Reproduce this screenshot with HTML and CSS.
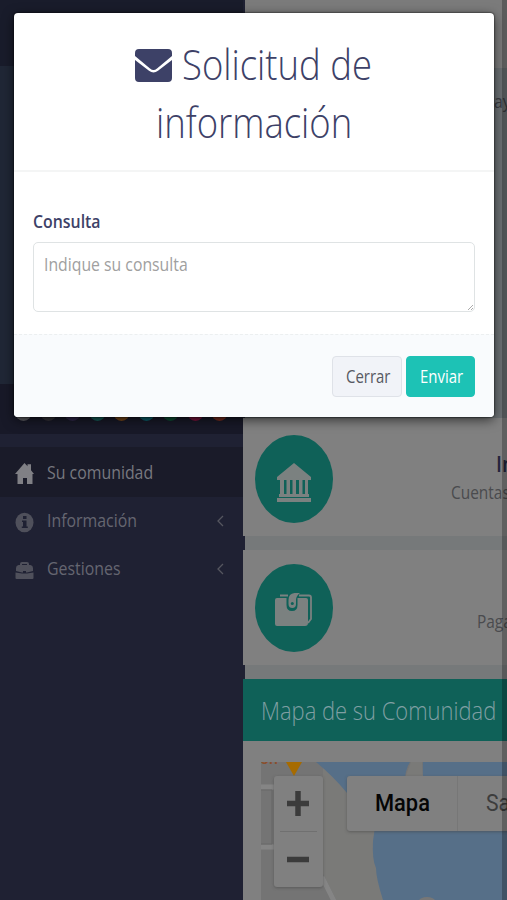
FILE: index.html
```html
<!DOCTYPE html>
<html lang="es">
<head>
<meta charset="utf-8">
<title>Solicitud de información</title>
<link rel="stylesheet" href="styles.css">
</head>
<body>
<div class="page">
  <aside class="sidebar">
    <div class="brand"></div>
    <div class="profile"></div>
    <div class="themes"><i class="c1"></i><i class="c2"></i><i class="c3"></i><i class="c4"></i><i class="c5"></i><i class="c6"></i><i class="c7"></i><i class="c8"></i><i class="c9"></i></div>
    <nav class="menu">
      <a class="item active">
        <svg width="20" height="22" viewBox="0 0 20 22"><path fill="#808085" d="M9.500 0 12.500 3.200V1.200h3.500v6L19 11h-1.500v10H12v-6H8v6H2.500V11H0z"/></svg>
        <span class="t">Su comunidad</span>
      </a>
      <a class="item">
        <svg width="20" height="22" viewBox="0 0 20 22"><ellipse cx="9.500" cy="11.500" rx="9" ry="9.800" fill="#4f505b"/><path fill="#1f2133" d="M8 5h3.500v3H8zM7 9.500h4.500v6h1.300V17H6.800v-1.500H8V11H7z"/></svg>
        <span class="t">Información</span>
        <svg class="chev" width="7" height="12" viewBox="0 0 7 12"><path d="M6 1 1 6l5 5" fill="none" stroke="#55565f" stroke-width="1.300"/></svg>
      </a>
      <a class="item">
        <svg width="20" height="22" viewBox="0 0 20 22"><path fill="#4f505b" d="M5 6V5q0-2 2-2h5q2 0 2 2v1h1.500q2.500.500 2.500 3v3l-6 1.500h-5L1 12V9q0-2.500 2.500-3zm2 0h5V5H7zM.500 13.500 7 14.500h5l6.500-1V19q0 1-1 1h-16q-1 0-1-1z"/><path fill="#1f2133" d="M8 12h3v2H8z"/></svg>
        <span class="t">Gestiones</span>
        <svg class="chev" width="7" height="12" viewBox="0 0 7 12"><path d="M6 1 1 6l5 5" fill="none" stroke="#55565f" stroke-width="1.300"/></svg>
      </a>
    </nav>
  </aside>
  <main class="main">
    <div class="topbar"></div>
    <div class="crumb"><span class="t">ay</span></div>
    <section class="card first">
      <div class="disc"><svg width="36" height="40" viewBox="0 0 36 40"><path fill="#7b8180" d="M18 0 35 14v3H1v-3zM4 17h4v14H4zm6.500 0H14v14h-3.500zm6 0H20v14h-3.500zm6.500 0h3.500v14H23zm6 0h3v14h-3zM3 31h30v3H3zM1 35h34v4H1z"/></svg></div>
      <div class="info"><b class="t">Información</b><span class="t">Cuentas, documentos</span></div>
    </section>
    <section class="card second">
      <div class="disc"><svg width="38" height="34" viewBox="0 0 38 34"><path fill="#7b8180" d="M2 5h9.500v7q0 6 5.500 6t5.500-6V5H31q2 0 2 2v23q0 3-3 3H2q-2 0-2-2V7q0-2 2-2z"/><path fill="none" stroke="#7b8180" stroke-width="1.800" d="M5 2.500h8M24 2.500h10q2 0 2 2V26l-3 4"/><path fill="#7b8180" d="M13.500 7q0-6.500 6-7H25q-4 3-4 7v4q0 4-3.700 4t-3.800-4z"/><circle cx="17.300" cy="10.500" r="1.500" fill="#0f6158"/></svg></div>
      <div class="info pay"><span class="t">Pagar recibos</span></div>
    </section>
    <section class="map-card">
      <h2><span class="t">Mapa de su Comunidad</span></h2>
      <div class="map">
        <svg class="tiles" width="246" height="138" viewBox="0 0 246 138"><path fill="#747474" d="M0 0h246v138H0z"/><path fill="#7a7a78" d="M16 0h110v138H75L62 112V0z"/><path fill="#566f88" d="M55 0h94q-5 7-6 25h18L162 0h84v138H122q-7-22-7-32-4-8-3-27l2-14V45L86 31Q72 14 55 0z"/><path fill="#7a7a78" d="M150 0h11l2 30h-22q2-12 4-17z"/><path d="M0 25h15M0 85h15M61 115l12 24" fill="none" stroke="#858585" stroke-width="5"/><path d="M0 28h11v54H0" fill="none" stroke="#686868"/><path fill="#a66b00" d="M25 0h16l-8 14z"/><ellipse cx="166" cy="139" rx="8" ry="4" fill="#777"/></svg>
        <span class="place">ón</span>
        <div class="zoom"><svg width="49" height="111" viewBox="0 0 49 111"><path d="M13 27.500h22M24 15v25M13 83.500h22" stroke="#3b3b3b" stroke-width="5.500"/><path d="M6 55.500h37" stroke="#707070"/></svg></div>
        <div class="types"><b><span class="t">Mapa</span></b><span class="sat"><span class="t">Satélite</span></span></div>
      </div>
    </section>
  </main>
  <div class="edge"></div>
  <div class="modal">
    <header>
      <h1><svg width="37" height="33" viewBox="0 0 37 33"><path fill="#3d4167" d="M4 0h29q4 0 4 4v3L22 19.500q-3.500 3-7 0L0 7V4q0-4 4-4z"/><path fill="#3d4167" d="M0 11 14 21.800q4.500 3.500 9 0L37 11v18q0 4-4 4H4q-4 0-4-4z"/></svg><span class="t">Solicitud de</span><span class="t line2">información</span></h1>
    </header>
    <div class="body">
      <label class="t">Consulta</label>
      <div class="field"><span class="t">Indique su consulta</span><svg width="5" height="5" viewBox="0 0 5 5"><path d="M0 5 5 0M3 5l2-2" stroke="#aaa"/></svg></div>
    </div>
    <footer>
      <button class="close"><span class="t">Cerrar</span></button>
      <button class="send"><span class="t">Enviar</span></button>
    </footer>
  </div>
</div>
</body>
</html>
```
FILE: styles.css
```css
* { box-sizing: border-box; }
body { margin: 0; font-family: "Open Sans", "Noto Sans", sans-serif; font-size: 18px; }
svg { display: block; flex: none; }
.t { display: inline-block; white-space: nowrap; transform: scaleX(.882); transform-origin: 0 50%; }
.page { position: relative; display: flex; width: 507px; height: 900px; overflow: hidden; background: #1f2133; }

.sidebar { width: 243px; flex: none; }
.brand { height: 66px; background: #191c2b; }
.profile { height: 318px; background: #202736; }
.themes { height: 50px; background: #181928; padding: 19px 0 0 15px; display: flex; gap: 7.500px; }
.themes i { width: 17px; height: 18px; border-radius: 50%; flex: none; }
.c1 { background: #5c5c61; } .c2 { background: #343238; } .c3 { background: #30284a; }
.c4 { background: #165c57; } .c5 { background: #76471a; } .c6 { background: #0b5f6a; }
.c7 { background: #0d4d33; } .c8 { background: #78143b; } .c9 { background: #762d20; }
.menu { padding-top: 13px; }
.item { display: flex; align-items: center; height: 48px; padding: 3px 17px 0 15px; color: #6b6c76; }
.item .t { margin: -3px 0 0 12px; color: #656671; }
.item .chev { margin: -2px 0 0 auto; position: relative; left: -2px; }
.active { height: 50px; background: #1a1b29; margin-bottom: -1px; }
.active .t { color: #77787f; }

.main { width: 264px; flex: none; background: linear-gradient(#76797a, #76797a) 2px 0 / 262px 900px no-repeat; }
.topbar { height: 68px; margin-left: 2px; background: #7b7b7b; }
.crumb { height: 350px; margin-left: 2px; background: #6b7073; padding: 21px 0 0 249px; color: #3a3c42; }
.card { display: flex; background: #808080; overflow: hidden; padding-left: 12px; }
.first { height: 118px; padding-top: 17px; }
.second { height: 115px; padding-top: 14px; margin-top: 14px; }
.disc { width: 78px; height: 88px; flex: none; border-radius: 50%; background: #0f6158; display: flex; align-items: center; justify-content: center; }
.first svg { margin-top: 8px; }
.second svg { margin-top: 4px; }
.info { display: flex; flex-direction: column; align-items: flex-start; margin-left: 118px; padding-top: 14px; color: #4a4b4e; font-size: 17.500px; line-height: 24px; }
.info b { font-size: 22px; line-height: 28px; margin: 0 0 3px 45px; color: #23243c; font-weight: 600; }
.info.pay { margin-left: 144px; padding-top: 45px; }
.map-card { margin-top: 14px; background: #808080; height: 221px; }
h2 { margin: 0; height: 62px; line-height: 63px; padding-left: 18px; background: #0f6158; color: #7f9fa3; font-weight: 300; font-size: 25px; overflow: hidden; }
h2 .t { transform: scaleX(.878); }
.map { position: relative; height: 138px; margin: 21px 0 0 18px; overflow: hidden; }
.place { position: absolute; left: -1px; top: -13px; color: #8b4f2d; font: 500 16px/19px Roboto, sans-serif; }
.zoom { position: absolute; left: 13px; top: 14px; width: 49px; height: 111px; background: #808080; border-radius: 3px; box-shadow: 0 1px 3px #4448; }
.types { position: absolute; left: 86px; top: 14px; width: 220px; height: 55px; display: flex; background: #808080; border-radius: 3px; box-shadow: 0 1px 3px #4448; font: 24px/54px Roboto, sans-serif; }
.types b { width: 111px; flex: none; padding-left: 28px; font-weight: 500; color: #050505; border-right: 1px solid #777; }
.types b .t { transform: scaleX(.91); }
.sat { padding-left: 28px; color: #3d3d3d; }
.edge { position: absolute; right: 0; top: 0; width: 5px; height: 900px; background: rgba(0,0,0,.25); }

.modal { position: absolute; left: 14px; top: 13px; width: 480px; height: 404px; background: #fff; border-radius: 4px; box-shadow: 0 3px 12px rgba(0,0,0,.6), 0 0 2px #000; color: #3d4167; }
.modal header { height: 159px; border-bottom: 2px solid #f4f5f5; padding-top: 22px; }
h1 { margin: 0; font-weight: 300; font-size: 42px; line-height: 58px; display: flex; flex-wrap: wrap; padding-left: 121px; }
h1 svg { margin: 14px 10px 0 0; }
h1 .t { transform: scaleX(.868); }
.line2 { margin-left: 21px; }
.body { height: 162px; padding: 37px 19px 0; }
.body label { display: block; height: 33px; line-height: 25px; font-weight: 600; }
.field { height: 70px; border: 1px solid #dfe3e4; border-radius: 5px; padding: 9px 10px; line-height: 25px; color: #a0a0a0; position: relative; }
.field .t { transform: scaleX(.877); }
.field svg { position: absolute; right: 1px; bottom: 1px; }
.modal footer { height: 83px; background: #f9fbfd; border-top: 1px dashed #eceff0; border-radius: 0 0 4px 4px; padding: 21px 19px 0; display: flex; justify-content: flex-end; gap: 4px; }
button { height: 41px; width: 70px; padding: 0 0 1px 13px; text-align: left; border: 1px solid #dfe2e8; border-radius: 4px; background: #f1f3f8; color: #575962; font: inherit; }
button .t { transform: scaleX(.83); }
.send { background: #1dc2b5; border-color: #1dc2b5; color: #fff; width: 69px; }
```
